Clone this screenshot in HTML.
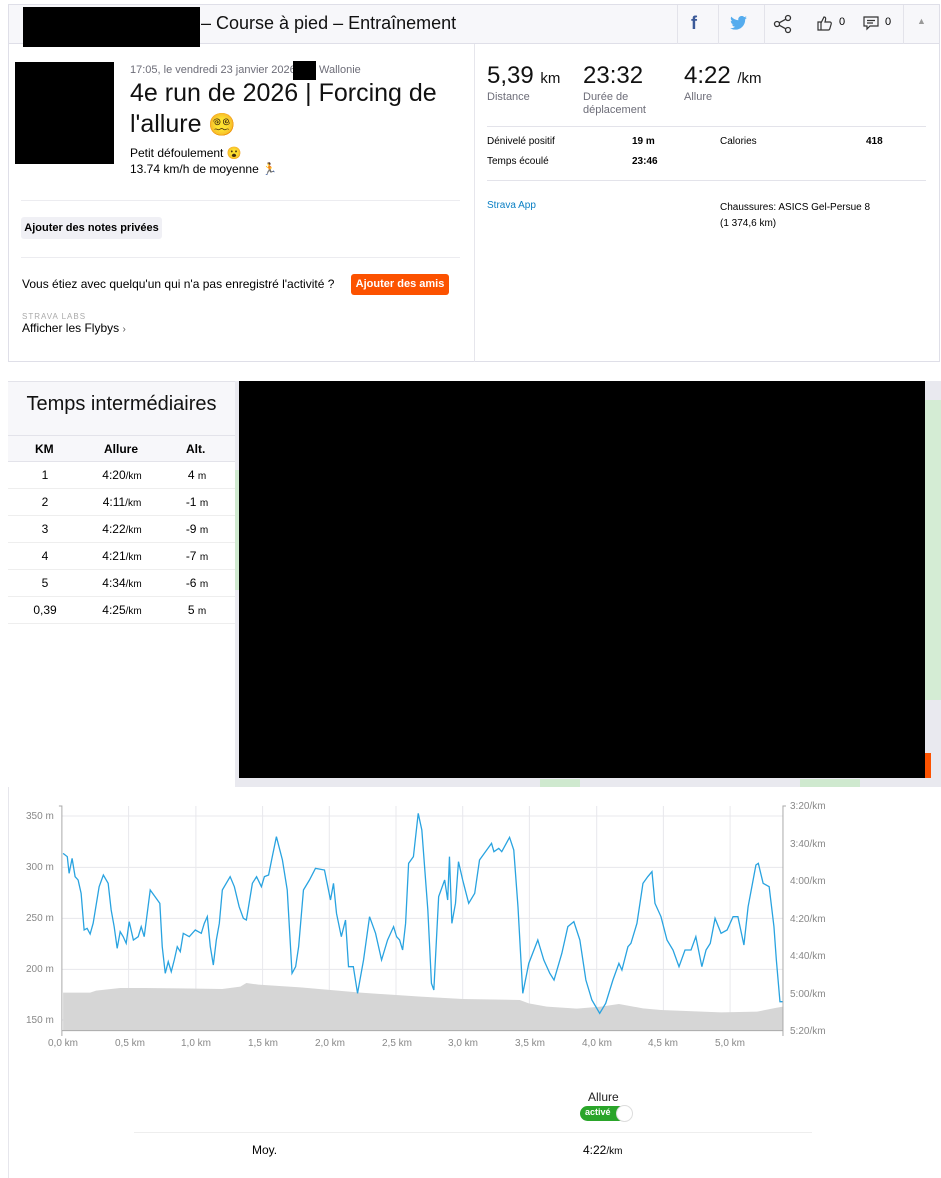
<!DOCTYPE html>
<html><head><meta charset="utf-8">
<style>
*{box-sizing:border-box;margin:0;padding:0}
body{width:941px;height:1178px;background:#fff;font-family:"Liberation Sans","Noto Sans CJK JP",sans-serif;color:#000;position:relative;overflow:hidden}
.a{position:absolute;white-space:nowrap}
.b{font-weight:bold}
.g{color:#6d6d78}
.r{display:flex;border-bottom:1px solid #eee;height:27px;line-height:26px}
</style></head><body>
<!-- header -->
<div class="a" style="left:8px;top:4px;width:932px;height:40px;background:#f7f7fa;border:1px solid #dfdfe8"></div>
<div class="a" style="left:23px;top:7px;width:177px;height:40px;background:#000"></div>
<div class="a" style="left:201px;top:13px;font-size:18px;color:#111">– Course à pied – Entraînement</div>
<div class="a" style="left:677px;top:5px;width:1px;height:39px;background:#e3e3ea"></div>
<div class="a" style="left:718px;top:5px;width:1px;height:39px;background:#e3e3ea"></div>
<div class="a" style="left:764px;top:5px;width:1px;height:39px;background:#e3e3ea"></div>
<div class="a" style="left:903px;top:5px;width:1px;height:39px;background:#e3e3ea"></div>
<div class="a b" style="left:691px;top:13px;font-size:18px;color:#3b5998">f</div>
<svg class="a" style="left:730px;top:16px" width="17" height="14" viewBox="0 0 24 20"><path d="M24 2.4a9.8 9.8 0 0 1-2.8.8A4.9 4.9 0 0 0 23.3.4a9.900 9.900 0 0 1-3.1 1.2A4.9 4.9 0 0 0 11.8 6 14 14 0 0 1 1.7.9a4.9 4.9 0 0 0 1.5 6.6A4.9 4.9 0 0 1 1 6.9 4.9 4.9 0 0 0 4.900 11.8a4.9 4.9 0 0 1-2.2.1 4.9 4.9 0 0 0 4.6 3.4A9.9 9.9 0 0 1 0 17.3 14 14 0 0 0 7.5 19.5c9 0 14-7.5 14-14v-.6A10 10 0 0 0 24 2.4z" fill="#55acee"/></svg>
<svg class="a" style="left:773px;top:14px" width="20" height="20" viewBox="0 0 20 20" fill="none" stroke="#333" stroke-width="1.3"><circle cx="15" cy="4" r="2.5"/><circle cx="4" cy="10" r="2.5"/><circle cx="15" cy="16" r="2.5"/><path d="M6.2 8.8l6.6-3.6M6.2 11.2l6.6 3.6"/></svg>
<svg class="a" style="left:817px;top:15px" width="16" height="16" viewBox="0 0 16 16" fill="none" stroke="#333" stroke-width="1.2"><path d="M1 7h3v8H1zM4 8l3-6c1.5 0 2 1 1.5 3l-.5 2h5c1 0 1.5 1 1.2 2l-1.5 5c-.3.7-.8 1-1.5 1H4"/></svg>
<div class="a" style="left:839px;top:16px;font-size:11px">0</div>
<svg class="a" style="left:863px;top:16px" width="16" height="15" viewBox="0 0 16 15" fill="none" stroke="#333" stroke-width="1.2"><path d="M1 1h14v9H7l-3 3v-3H1z"/><path d="M4 4.5h8M4 7h6"/></svg>
<div class="a" style="left:885px;top:16px;font-size:11px">0</div>
<div class="a" style="left:917px;top:16px;font-size:9px;color:#999">▲</div>

<!-- main card -->
<div class="a" style="left:8px;top:44px;width:932px;height:318px;border:1px solid #dfdfe8;border-top:none"></div>
<div class="a" style="left:474px;top:44px;width:1px;height:318px;background:#e6e6ec"></div>
<div class="a" style="left:15px;top:62px;width:99px;height:102px;background:#000"></div>
<div class="a g" style="left:130px;top:64px;font-size:11px">17:05, le vendredi 23 janvier 2026 ·</div>
<div class="a" style="left:293px;top:61px;width:23px;height:19px;background:#000"></div>
<div class="a g" style="left:319px;top:64px;font-size:11px">Wallonie</div>
<div class="a" style="left:130px;top:78px;font-size:25px;line-height:31px;color:#111">4e run de 2026 | Forcing de<br>l'allure <span style="font-size:22px">😵‍💫</span></div>
<div class="a" style="left:130px;top:145px;font-size:12px;line-height:16px">Petit défoulement 😮<br>13.74 km/h de moyenne 🏃</div>
<div class="a" style="left:21px;top:200px;width:439px;height:1px;background:#ececf0"></div>
<div class="a b" style="left:21px;top:217px;width:141px;height:22px;background:#f0f0f5;border-radius:3px;font-size:11px;line-height:22px;text-align:center">Ajouter des notes privées</div>
<div class="a" style="left:21px;top:257px;width:439px;height:1px;background:#ececf0"></div>
<div class="a" style="left:22px;top:277px;font-size:12px">Vous étiez avec quelqu'un qui n'a pas enregistré l'activité ?</div>
<div class="a b" style="left:351px;top:274px;width:98px;height:21px;background:#fc5200;color:#fff;border-radius:3px;font-size:11px;line-height:21px;text-align:center">Ajouter des amis</div>
<div class="a" style="left:22px;top:312px;font-size:8px;color:#aaa;letter-spacing:1px">STRAVA LABS</div>
<div class="a" style="left:22px;top:321px;font-size:12px">Afficher les Flybys <span style="font-size:10px;color:#555">›</span></div>

<!-- stats -->
<div class="a" style="left:487px;top:62px;font-size:24px;color:#111">5,39 <span style="font-size:15px">km</span></div>
<div class="a g" style="left:487px;top:91px;font-size:11px">Distance</div>
<div class="a" style="left:583px;top:62px;font-size:24px;color:#111">23:32</div>
<div class="a g" style="left:583px;top:91px;font-size:11px;line-height:13px">Durée de<br>déplacement</div>
<div class="a" style="left:684px;top:62px;font-size:24px;color:#111">4:22 <span style="font-size:15px">/km</span></div>
<div class="a g" style="left:684px;top:91px;font-size:11px">Allure</div>
<div class="a" style="left:487px;top:126px;width:439px;height:1px;background:#e3e3ea"></div>
<div class="a" style="left:487px;top:136px;font-size:10px">Dénivelé positif</div>
<div class="a b" style="left:632px;top:136px;font-size:10px">19 m</div>
<div class="a" style="left:720px;top:136px;font-size:10px">Calories</div>
<div class="a b" style="left:866px;top:136px;font-size:10px">418</div>
<div class="a" style="left:487px;top:156px;font-size:10px">Temps écoulé</div>
<div class="a b" style="left:632px;top:156px;font-size:10px">23:46</div>
<div class="a" style="left:487px;top:180px;width:439px;height:1px;background:#e3e3ea"></div>
<div class="a" style="left:487px;top:200px;font-size:10px;color:#0a7fc4">Strava App</div>
<div class="a" style="left:720px;top:200px;font-size:10px;line-height:16px">Chaussures: ASICS Gel-Persue 8<br>(1 374,6 km)</div>

<!-- splits -->
<div class="a" style="left:8px;top:381px;width:227px;height:55px;background:#f7f7fa;border-top:1px solid #e3e3ea;border-bottom:1px solid #e3e3ea"></div>
<div class="a" style="left:8px;top:393px;width:227px;text-align:center;font-size:20px;color:#111">Temps intermédiaires</div>
<div class="a" style="left:8px;top:436px;width:227px;height:26px;background:#f7f7fa;border-bottom:1px solid #e3e3ea"></div>
<div class="a b" style="left:35px;top:442px;font-size:12px">KM</div>
<div class="a b" style="left:104px;top:442px;font-size:12px">Allure</div>
<div class="a b" style="left:186px;top:442px;font-size:12px">Alt.</div>
<div class="a" style="left:8px;top:462px;width:227px;font-size:12px">
<div class="r"><span style="width:74px;text-align:center">1</span><span style="width:80px;text-align:center">4:20<small>/km</small></span><span style="width:70px;text-align:center">4 <small>m</small></span></div>
<div class="r"><span style="width:74px;text-align:center">2</span><span style="width:80px;text-align:center">4:11<small>/km</small></span><span style="width:70px;text-align:center">-1 <small>m</small></span></div>
<div class="r"><span style="width:74px;text-align:center">3</span><span style="width:80px;text-align:center">4:22<small>/km</small></span><span style="width:70px;text-align:center">-9 <small>m</small></span></div>
<div class="r"><span style="width:74px;text-align:center">4</span><span style="width:80px;text-align:center">4:21<small>/km</small></span><span style="width:70px;text-align:center">-7 <small>m</small></span></div>
<div class="r"><span style="width:74px;text-align:center">5</span><span style="width:80px;text-align:center">4:34<small>/km</small></span><span style="width:70px;text-align:center">-6 <small>m</small></span></div>
<div class="r"><span style="width:74px;text-align:center">0,39</span><span style="width:80px;text-align:center">4:25<small>/km</small></span><span style="width:70px;text-align:center">5 <small>m</small></span></div>
</div>

<!-- map -->
<div class="a" style="left:235px;top:381px;width:706px;height:406px;background:#e9e9ef"></div>
<div class="a" style="left:925px;top:400px;width:16px;height:300px;background:#d4ecd4"></div>
<div class="a" style="left:235px;top:470px;width:5px;height:120px;background:#cfe9cf"></div>
<div class="a" style="left:540px;top:779px;width:40px;height:8px;background:#cfe9cf"></div>
<div class="a" style="left:800px;top:779px;width:60px;height:8px;background:#cfe9cf"></div>
<div class="a" style="left:925px;top:753px;width:6px;height:25px;background:#fc5200"></div>
<div class="a" style="left:239px;top:381px;width:686px;height:397px;background:#000"></div>

<!-- chart -->
<div class="a" style="left:8px;top:787px;width:1px;height:391px;background:#e6e6ec"></div>
<svg class="a" style="left:0;top:780px" width="941" height="398" viewBox="0 0 1566 1194" preserveAspectRatio="none">
<g stroke="#e8e8ec" fill="none">
<path vector-effect="non-scaling-stroke" d="M103 108H1303M103 262H1303M103 415H1303M103 568H1303M103 720H1303"/>
<path vector-effect="non-scaling-stroke" d="M214 78V752M326 78V752M437 78V752M548 78V752M659 78V752M770 78V752M881 78V752M993 78V752M1104 78V752M1215 78V752"/>
</g>
<path d="M105 638L150 638 160 632 200 624 240 624 300 625 370 627 400 620 410 609 430 614 500 622 550 630 600 638 700 650 770 657 865 660 880 670 910 680 960 686 1000 680 1030 672 1070 685 1100 690 1200 697 1260 695 1290 684 1303 680 1303 752 105 752Z" fill="#d6d6d6"/>
<polyline fill="none" stroke="#29a3e0" stroke-width="1.3" vector-effect="non-scaling-stroke" points="105,220 112,230 115,280 120,235 125,290 130,300 135,340 140,450 145,445 150,462 155,430 165,320 172,285 180,310 185,390 190,440 195,505 200,455 205,470 210,490 215,425 222,480 230,470 235,440 240,470 250,330 262,360 266,370 270,500 275,580 280,545 285,575 290,540 295,500 300,515 305,460 315,470 325,450 335,460 340,430 345,410 350,500 355,555 360,480 365,430 370,330 383,290 390,320 398,380 405,415 410,420 420,310 427,290 435,320 440,290 447,285 452,240 460,170 470,240 478,330 486,580 492,560 497,500 505,330 515,300 525,265 540,270 550,360 555,310 560,400 568,470 575,420 580,560 588,560 595,640 605,540 615,410 625,460 635,540 645,480 655,440 660,470 665,480 670,510 675,430 680,250 688,230 696,100 702,150 712,390 718,610 722,630 730,350 740,300 745,360 748,230 752,430 758,370 763,245 770,300 780,370 790,340 798,240 810,210 818,190 822,215 830,205 835,215 848,172 855,210 862,380 870,640 880,550 895,480 905,540 915,580 922,600 935,520 945,440 955,425 965,480 975,600 985,660 998,700 1008,670 1020,600 1030,550 1035,570 1045,500 1050,490 1060,430 1070,310 1078,290 1085,275 1090,370 1100,410 1110,480 1120,510 1130,560 1140,510 1150,510 1158,470 1168,560 1175,510 1182,490 1190,415 1200,460 1210,450 1220,410 1228,410 1238,495 1245,380 1258,255 1262,250 1270,310 1280,320 1288,440 1292,540 1298,665 1303,665"/>
<path d="M98 78H103V752H1303V78H1308M1303 752V768M103 752V768" fill="none" stroke="#aaa" stroke-width="1" vector-effect="non-scaling-stroke"/>
</svg>
<div class="a" style="left:26px;top:791px;font-size:10px;color:#888;line-height:51px">350 m<br>300 m<br>250 m<br>200 m<br>150 m</div>
<div class="a" style="left:790px;top:788px;font-size:10px;color:#888;line-height:37.5px">3:20/km<br>3:40/km<br>4:00/km<br>4:20/km<br>4:40/km<br>5:00/km<br>5:20/km</div>
<div class="a" style="left:48px;top:1038px;font-size:10px;color:#888">
<span class="a" style="left:0">0,0 km</span><span class="a" style="left:67px">0,5 km</span><span class="a" style="left:133px">1,0 km</span><span class="a" style="left:200px">1,5 km</span><span class="a" style="left:267px">2,0 km</span><span class="a" style="left:334px">2,5 km</span><span class="a" style="left:400px">3,0 km</span><span class="a" style="left:467px">3,5 km</span><span class="a" style="left:534px">4,0 km</span><span class="a" style="left:600px">4,5 km</span><span class="a" style="left:667px">5,0 km</span></div>

<div class="a" style="left:588px;top:1090px;font-size:12px;color:#222">Allure</div>
<div class="a" style="left:580px;top:1106px;width:52px;height:15px;background:#2aa52a;border-radius:8px"></div>
<div class="a b" style="left:585px;top:1107px;font-size:9px;color:#fff">activé</div>
<div class="a" style="left:616px;top:1105px;width:17px;height:17px;background:#fff;border:1px solid #ddd;border-radius:50%"></div>
<div class="a" style="left:134px;top:1132px;width:678px;height:1px;background:#eee"></div>
<div class="a" style="left:252px;top:1143px;font-size:12px">Moy.</div>
<div class="a" style="left:583px;top:1143px;font-size:12px">4:22<small>/km</small></div>
</body></html>
